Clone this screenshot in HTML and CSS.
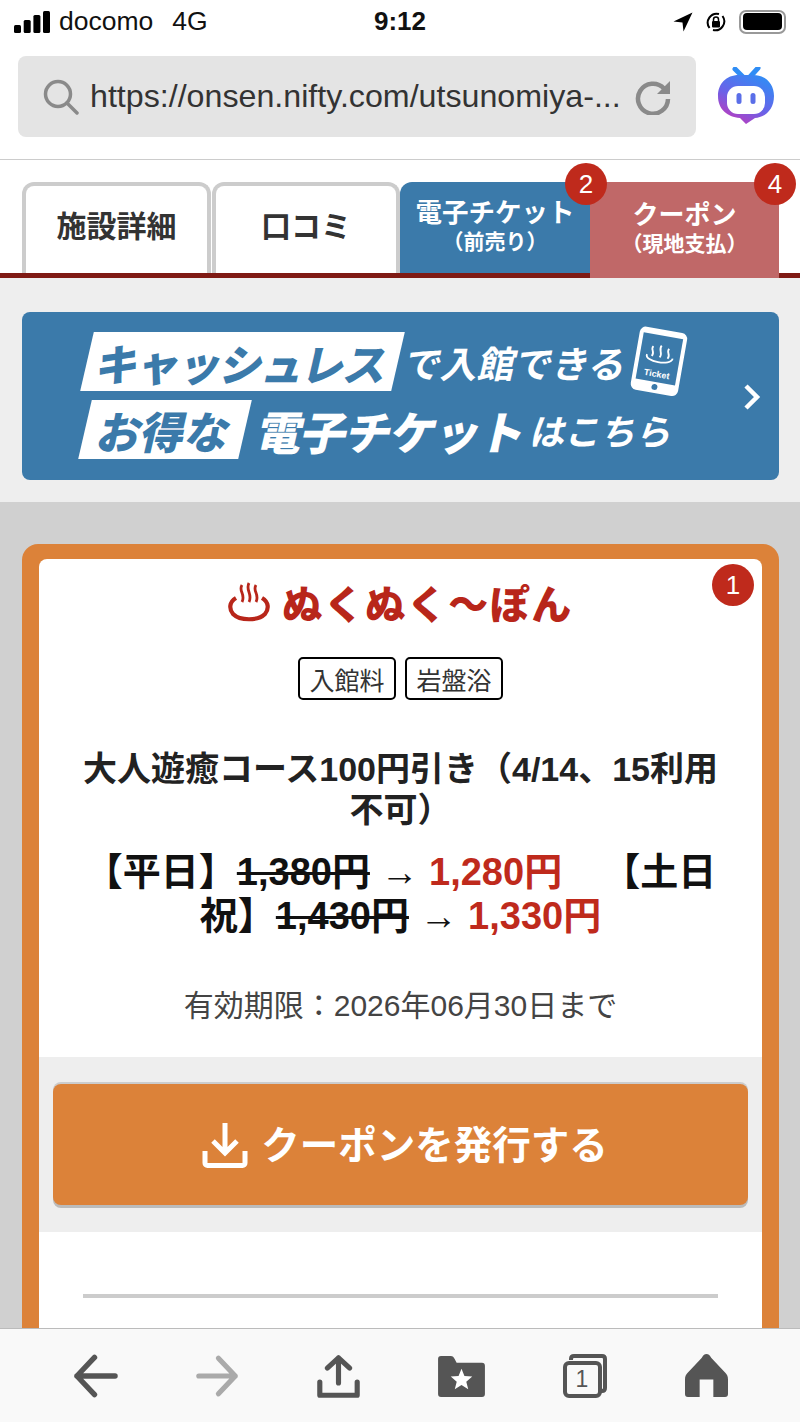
FILE: index.html
```html
<!DOCTYPE html>
<html lang="ja">
<head>
    <meta charset="utf-8">
    <title>クーポン</title>
    <link rel="stylesheet" href="styles.css">
</head>
<body>
<div class="screen">
    <div class="status-bar">
        <div class="status-left">
            <svg class="signal" width="36" height="22" viewBox="0 0 36 22"><rect x="0" y="14" width="7" height="8" rx="1.5"/><rect x="9.700" y="9" width="7" height="13" rx="1.5"/><rect x="19.400" y="4" width="7" height="18" rx="1.5"/><rect x="29" y="0" width="7" height="22" rx="1.5"/></svg>
            <span>docomo</span>
            <span class="net">4G</span>
        </div>
        <div class="status-time">9:12</div>
        <div class="status-right">
            <svg width="20" height="20" viewBox="0 0 20 20"><path d="M19.500 .5 .5 9.500l9 1 1 9z"/></svg>
            <svg width="22" height="22" viewBox="0 0 22 22"><path d="M4.500 17A9 9 0 0 1 14 3M17.500 5A9 9 0 0 1 8 19" fill="none" stroke="#000" stroke-width="2"/><rect x="7" y="10" width="8" height="6.500" rx="1"/><path d="M8.500 10V8.500a2.500 2.500 0 0 1 5 0V10" fill="none" stroke="#000" stroke-width="1.500"/></svg>
            <div class="battery"><div class="battery-fill"></div></div>
        </div>
    </div>

    <div class="browser-bar">
        <div class="url-box">
            <svg width="36" height="36" viewBox="0 0 36 36" fill="none" stroke="#8a8a8a" stroke-width="3.500"><circle cx="15" cy="15" r="12.500"/><path d="m24 24 10 10" stroke-linecap="round"/></svg>
            <span class="url-text">https://onsen.nifty.com/utsunomiya-...</span>
            <svg width="36" height="36" viewBox="0 0 36 36" fill="none"><path d="M29 9.500A15 15 0 1 0 33 20" stroke="#8a8a8a" stroke-width="4.500"/><path d="M35 2v13H22z" fill="#8a8a8a"/></svg>
        </div>
        <svg class="assistant" width="58" height="58" viewBox="0 0 58 58">
            <defs><linearGradient id="bot" x1="0.800" y1="0" x2="0.200" y2="1"><stop offset="0" stop-color="#2f8df5"/><stop offset="0.55" stop-color="#6a62e8"/><stop offset="1" stop-color="#c637b8"/></linearGradient></defs>
            <path d="M18 2l9 9M41 1l-9 10" stroke="#2f8df5" stroke-width="5" stroke-linecap="round"/>
            <path d="M22 8h14C49 8 57 17 57 29c0 13-8 21-19 22l-9 6-6-6C10 50 1 42 1 29 1 17 9 8 22 8z" fill="url(#bot)"/>
            <rect x="10" y="19" width="38" height="28" rx="11" fill="#fff"/>
            <rect x="19.500" y="26" width="5" height="11" rx="2.500" fill="#5a6ee8"/>
            <rect x="33.500" y="26" width="5" height="11" rx="2.500" fill="#5a6ee8"/>
        </svg>
    </div>

    <main class="page">
        <nav class="tabs">
            <a class="tab tab-plain">施設詳細</a>
            <a class="tab tab-plain tab-second">口コミ</a>
            <a class="tab tab-ticket">
                <span class="tab-main">電子チケット</span>
                <span class="tab-sub">（前売り）</span>
                <span class="badge">2</span>
            </a>
            <a class="tab tab-coupon">
                <span class="tab-main">クーポン</span>
                <span class="tab-sub">（現地支払）</span>
                <span class="badge">4</span>
            </a>
        </nav>

        <section class="banner-wrap">
            <a class="banner">
                <div class="banner-lines">
                    <div class="banner-row">
                        <span class="banner-box box-first">キャッシュレス</span>
                        <span class="banner-small banner-small-first">で入館できる</span>
                        <svg class="phone" width="60" height="68" viewBox="0 0 60 68"><rect x="2" y="2" width="48" height="64" rx="6" fill="#fff"/><rect x="6" y="8" width="40" height="47" fill="#3b7aaa"/><path d="M18 20c-3 4 3 5 0 10M26 18c-3 5 3 7 0 12M34 20c-3 4 3 5 0 10M13 29c-2 8 26 8 26 0" fill="none" stroke="#fff" stroke-width="1.800"/><text x="26" y="50" font-size="9" font-weight="700" fill="#fff" text-anchor="middle">Ticket</text><circle cx="26" cy="60" r="3" fill="#3b7aaa"/></svg>
                    </div>
                    <div class="banner-row">
                        <span class="banner-box box-second">お得な</span>
                        <span class="banner-big">電子チケット</span>
                        <span class="banner-small">はこちら</span>
                    </div>
                </div>
                <svg class="chevron" width="18" height="28" viewBox="0 0 18 28"><path d="M3 3l11 11L3 25" fill="none" stroke="#fff" stroke-width="4.500"/></svg>
            </a>
        </section>

        <section class="coupon-area">
            <div class="coupon-card">
                <span class="badge badge-card">1</span>
                <div class="coupon-body">
                    <div class="coupon-logo">
                        <svg width="42" height="40" viewBox="0 0 42 40" fill="none" stroke="#b8261a"><path d="M14 3c-4 6 4 9 0 17M21 1c-4 7 4 11 0 19M28 3c-4 6 4 9 0 17" stroke-width="2.800"/><path d="M8 16C1 20 1 27 5 32c7 7 25 7 32 0 4-5 4-12-3-16" stroke-width="4.200"/></svg>
                        <span>ぬくぬく〜ぽん</span>
                    </div>
                    <div class="tags">
                        <span class="tag">入館料</span>
                        <span class="tag">岩盤浴</span>
                    </div>
                    <h2 class="coupon-title">大人遊癒コース100円引き（4/14、15利用不可）</h2>
                    <p class="coupon-price">【平日】<del>1,380円</del> <span class="arrow">→</span> <span class="price-new">1,280円</span><span class="price-gap">　</span>【土日<br>祝】<del>1,430円</del> <span class="arrow">→</span> <span class="price-new">1,330円</span></p>
                    <p class="coupon-date">有効期限：2026年06月30日まで</p>
                </div>
                <div class="coupon-action">
                    <a class="issue-btn">
                        <svg width="46" height="46" viewBox="0 0 46 46" fill="none" stroke="#fff" stroke-width="5"><path d="M23 1v29M11 19l12 12 12-12"/><path d="M3 29v12a2.500 2.500 0 0 0 2.500 2.500h35A2.500 2.500 0 0 0 43 41V29"/></svg>
                        <span class="issue-label">クーポンを発行する</span>
                    </a>
                </div>
                <div class="coupon-foot">
                    <div class="coupon-rule"></div>
                </div>
            </div>
        </section>
    </main>

    <div class="toolbar">
        <svg width="45" height="44" viewBox="0 0 46 44" fill="none" stroke="#555" stroke-width="5.500" stroke-linecap="round" stroke-linejoin="round"><path d="M43 22H4M22 3 4 22l18 19"/></svg>
        <svg width="43" height="44" viewBox="0 0 46 44" fill="none" stroke="#aaa" stroke-width="5.500" stroke-linecap="round" stroke-linejoin="round"><path d="M3 22h39M24 3l18 19-18 19"/></svg>
        <svg width="43" height="45" viewBox="0 0 46 46" fill="none" stroke="#555" stroke-width="5.500" stroke-linecap="round" stroke-linejoin="round"><path d="M23 30V3M11 14 23 3l12 11"/><path d="M3 29v14h40V29"/></svg>
        <svg class="toolbar-folder" width="47" height="41" viewBox="0 0 48 42"><path d="M3 0h10c2 0 3 1 4 3l2 4h26c2 0 3 1 3 3v29c0 2-1 3-3 3H3c-2 0-3-1-3-3V3c0-2 1-3 3-3z" fill="#555"/><path d="m24 13 3 7.500 8 .6-6.100 5.200 2 7.700-6.900-4.200-6.900 4.200 2-7.700-6.100-5.200 8-.6z" fill="#fff"/></svg>
        <div class="tab-count">
            <svg width="44" height="44" viewBox="0 0 44 44" fill="none" stroke="#555" stroke-width="4"><path d="M8 6V5c0-2 1-3 3-3h28c2 0 3 1 3 3v29c0 2-1 3-3 3h-2"/><rect x="2" y="9" width="35" height="33" rx="4"/></svg>
            <span class="tab-num">1</span>
        </div>
        <svg width="43" height="43" viewBox="0 0 44 44"><path d="M22 0c2 0 3 1 5 4l14 15c2 2 3 4 3 7v15c0 2-1 3-3 3H29V26H15v18H3c-2 0-3-1-3-3V26c0-3 1-5 3-7L17 4c2-3 3-4 5-4z" fill="#555"/></svg>
    </div>
</div>
</body>
</html>
```

FILE: styles.css
```css
* {
    box-sizing: border-box;
}
body {
    margin: 0;
    font-family: "Liberation Sans", "Noto Sans CJK JP", sans-serif;
    color: #222;
    background: #fff;
}
.screen {
    width: 800px;
    height: 1422px;
    display: flex;
    flex-direction: column;
    overflow: hidden;
}

/* status bar */
.status-bar {
    height: 42px;
    padding: 1px 14px 0 14px;
    display: grid;
    grid-template-columns: 1fr auto 1fr;
    align-items: center;
    font-size: 26.500px;
    color: #111;
}
.status-left {
    display: flex;
    align-items: center;
}
.signal {
    margin-right: 9px;
}
.net {
    margin-left: 19px;
}
.status-time {
    font-size: 26px;
    font-weight: 700;
}
.status-right {
    display: flex;
    align-items: center;
    justify-content: flex-end;
    gap: 12px;
}
.battery {
    width: 47px;
    height: 24px;
    padding: 1.500px 2px;
    border: 2px solid #999;
    border-radius: 7px;
}
.battery-fill {
    width: 100%;
    height: 100%;
    background: #000;
    border-radius: 4px;
}

/* browser bar */
.browser-bar {
    height: 118px;
    padding: 14px 25px 0 18px;
    display: flex;
    align-items: flex-start;
    justify-content: space-between;
    border-bottom: 1px solid #ccc;
}
.url-box {
    width: 678px;
    height: 81px;
    padding: 0 25px;
    display: flex;
    align-items: center;
    justify-content: space-between;
    background: #e4e4e4;
    border-radius: 8px;
}
.url-text {
    flex: 1;
    margin-left: 11px;
    font-size: 32.200px;
    white-space: nowrap;
    color: #333;
}
.assistant {
    margin-top: 11px;
}

/* main page */
.page {
    flex: 1;
    min-height: 0;
    overflow: hidden;
}
.tabs {
    padding: 22px 21px 0 22px;
    display: flex;
    height: 118px;
    border-bottom: 5px solid #7f1a14;
    background: #fff;
}
.tab {
    position: relative;
    width: 189px;
    height: 91px;
    display: flex;
    flex-direction: column;
    align-items: center;
    justify-content: center;
    font-weight: 700;
    border-radius: 12px 12px 0 0;
}
.tab-plain {
    padding-bottom: 12px;
    font-size: 30px;
    color: #333;
    border: 4px solid #ccc;
    border-bottom: 0;
    background: #fff;
}
.tab-second {
    width: 188px;
    margin-left: 1px;
}
.tab-ticket {
    width: 190px;
    padding-bottom: 4px;
    background: #3b7aaa;
    color: #fff;
    border-radius: 12px 0 0 0;
}
.tab-coupon {
    height: 96px;
    padding-bottom: 5px;
    background: #c06868;
    color: #fff;
    border-radius: 0;
}
.tab-main {
    font-size: 26.500px;
    line-height: 32px;
}
.tab-coupon .tab-main {
    font-size: 26px;
}
.tab-sub {
    font-size: 21px;
    line-height: 26px;
}
.badge {
    position: absolute;
    z-index: 2;
    top: -19px;
    right: -17px;
    width: 42px;
    height: 42px;
    display: flex;
    align-items: center;
    justify-content: center;
    border-radius: 50%;
    background: #bf2a1c;
    color: #fff;
    font-size: 26px;
    font-weight: 400;
}

/* banner */
.banner-wrap {
    height: 224px;
    padding: 34px 21px 0 22px;
    background: #eee;
}
.banner {
    height: 168px;
    padding: 20px 18px 0 58px;
    display: flex;
    justify-content: space-between;
    background: #3b7aaa;
    border-radius: 8px;
    color: #fff;
    font-weight: 700;
}
.banner-lines {
    display: flex;
    flex-direction: column;
    gap: 9px;
}
.banner-row {
    height: 59px;
    display: flex;
    align-items: center;
    transform: skewX(-13deg);
}
.banner-box {
    height: 59px;
    display: flex;
    align-items: center;
    justify-content: center;
    background: #fff;
    color: #3b7aaa;
    font-weight: 900;
}
.box-first {
    width: 311px;
    margin-left: 7px;
    font-size: 43px;
    letter-spacing: -1.500px;
}
.box-second {
    width: 160px;
    margin-left: 5px;
    font-size: 44px;
}
.banner-small {
    margin-left: 6px;
    font-size: 35.500px;
    white-space: nowrap;
}
.banner-small-first {
    margin-left: 8px;
    font-size: 37px;
}
.banner-big {
    margin-left: 14px;
    font-size: 45.500px;
    font-weight: 900;
    letter-spacing: -1px;
    white-space: nowrap;
}
.phone {
    margin-left: 6px;
    transform: skewX(13deg) rotate(10deg);
}
.chevron {
    margin-top: 51px;
}

/* coupon card */
.coupon-area {
    height: 900px;
    padding: 42px 21px 0 22px;
    background: #d0d0d0;
}
.coupon-card {
    position: relative;
    height: 900px;
    padding: 15px 17px 0;
    background: #dc8239;
    border-radius: 16px 16px 0 0;
}
.badge-card {
    top: 20px;
    right: 25px;
}
.coupon-body {
    height: 498px;
    padding: 18px 44px 0;
    background: #fff;
    border-radius: 8px 8px 0 0;
    text-align: center;
}
.coupon-logo {
    height: 50px;
    display: flex;
    align-items: center;
    justify-content: center;
    gap: 12px;
    color: #b8261a;
    font-size: 40px;
    font-weight: 900;
    letter-spacing: 1.500px;
}
.tags {
    margin-top: 30px;
    display: flex;
    justify-content: center;
    gap: 9px;
}
.tag {
    padding: 0 9.500px;
    height: 43px;
    display: flex;
    align-items: center;
    border: 2px solid #000;
    border-radius: 5px;
    font-size: 25px;
    color: #333;
    background: #fff;
}
.coupon-title {
    margin: 49px -3px 0;
    font-size: 34px;
    line-height: 41px;
    font-weight: 700;
    color: #222;
}
.coupon-price {
    margin: 19px -10px 0;
    font-size: 38px;
    line-height: 44px;
    font-weight: 700;
    white-space: nowrap;
    color: #111;
}
.arrow {
    font-weight: 400;
}
.price-new {
    color: #bf2a1c;
}
.price-gap {
    margin-right: 21px;
}
.coupon-date {
    margin: 48px 0 0;
    font-size: 30px;
    line-height: 40px;
    color: #444;
}
.coupon-action {
    height: 175px;
    padding: 27px 14px 0;
    background: #eee;
}
.issue-btn {
    height: 121px;
    padding-left: 9px;
    display: flex;
    align-items: center;
    justify-content: center;
    gap: 13px;
    background: #dc8239;
    border-radius: 8px;
    box-shadow: 0 3px 0 #bbb, 0 -2px 0 #ccc;
    color: #fff;
    font-size: 38.500px;
    font-weight: 700;
}
.issue-label {
    margin-bottom: 6px;
}
.coupon-foot {
    height: 200px;
    padding: 62px 44px 0;
    background: #fff;
}
.coupon-rule {
    height: 4px;
    background: #ccc;
}

/* bottom toolbar */
.toolbar {
    height: 94px;
    padding: 25px 0 0 73px;
    display: flex;
    gap: 78px;
    align-items: flex-start;
    background: #f9f9f9;
    border-top: 1px solid #bbb;
}
.toolbar-folder {
    margin-top: 2px;
}
.tab-count {
    position: relative;
    width: 44px;
    height: 44px;
}
.tab-num {
    position: absolute;
    left: 0;
    right: 6px;
    top: 11px;
    text-align: center;
    font-size: 23px;
    line-height: 28px;
    color: #555;
}
```
